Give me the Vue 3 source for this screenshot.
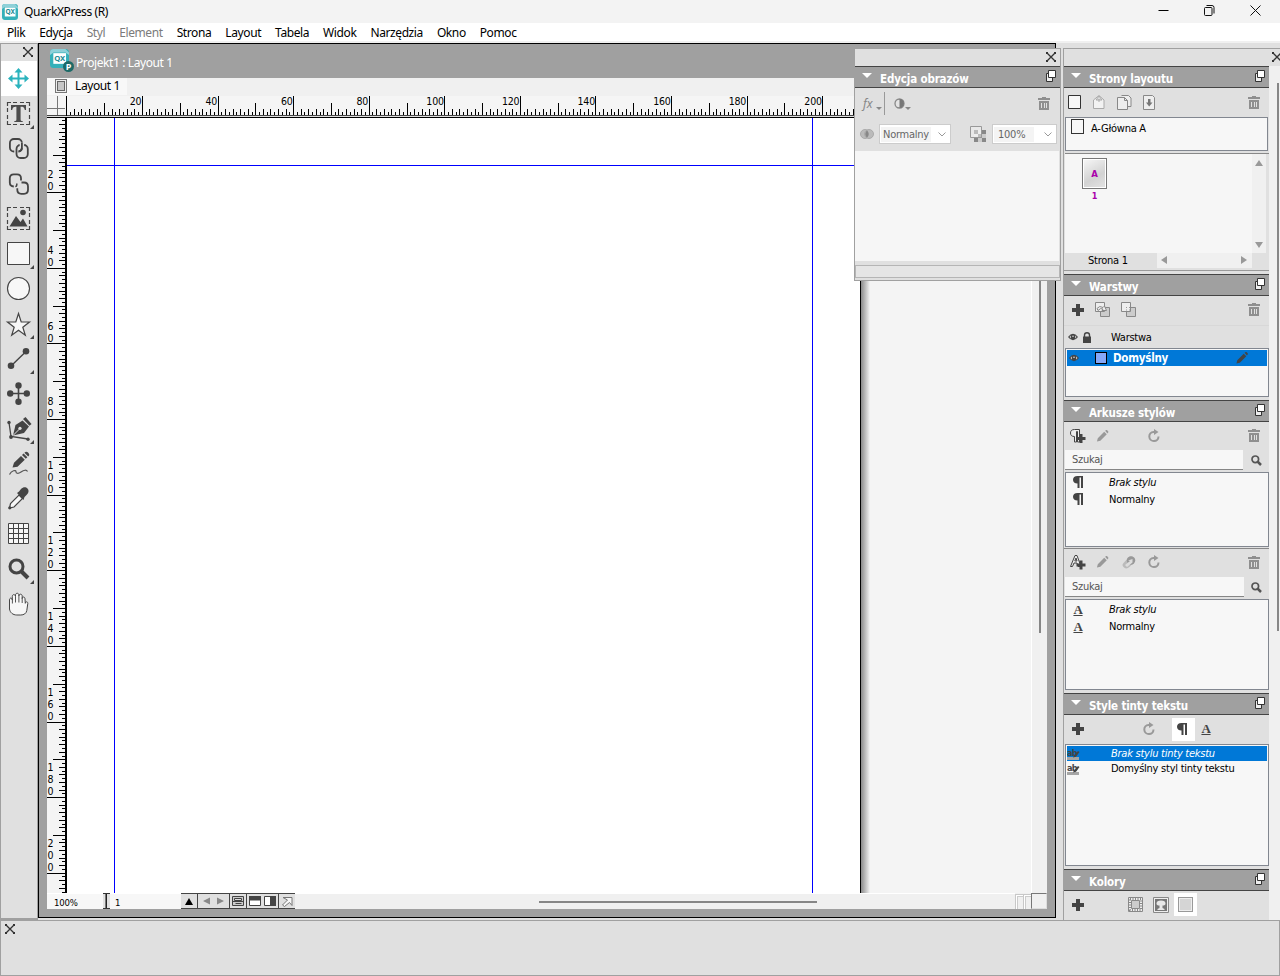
<template>
    <div class="app">
        <svg class="defs" width="0" height="0">
            <symbol id="logo" viewBox="0 0 16 16">
                <rect x="0" y="0" width="16" height="16" rx="3" fill="#35b0b9" />
                <path d="M0 5V3a3 3 0 0 1 3-3h10l3 3v2l-3-2H3z" fill="#8fd0d8" />
                <rect x="2.800" y="3.500" width="10.700" height="9" fill="#fff" />
            </symbol>
            <symbol id="cross" viewBox="0 0 10 10">
                <path d="M1 1l8 8M9 1L1 9" stroke="#333" stroke-width="1.300" />
                <path d="M0 0h2v2H0zM8 0h2v2H8zM0 8h2v2H0zM8 8h2v2H8z" fill="#333" />
            </symbol>
            <symbol id="restore" viewBox="0 0 10 12">
                <path d="M.500 3.500h6v8h-6z" fill="#eee" stroke="#333" />
                <path d="M2.500.500h7v7h-7z" fill="#fff" stroke="#333" />
            </symbol>
            <symbol id="trash" viewBox="0 0 12 13">
                <path d="M0 1h12v2H0zM4 0h4v2H4zM1 4h10v9H1z" fill="#8f8f8f" />
                <path d="M3.500 6v5M6.500 6v5M8.500 6v5" stroke="#e0e0e0" />
            </symbol>
            <symbol id="plus" viewBox="0 0 12 12"><path d="M4 0h4v4h4v4H8v4H4V8H0V4h4z" fill="#444" /></symbol>
            <symbol id="pencil" viewBox="0 0 14 14">
                <path d="M0.500 13.500l1-4L9 2l3 3-7.500 7.500zM10 1l1-.7c.6-.4 1.200-.2 1.700.3l.7.7c.5.500.6 1 .2 1.600L12.800 4z" fill="currentColor" />
            </symbol>
            <symbol id="redo" viewBox="0 0 12 14">
                <path d="M10.500 7.500a4.600 4.600 0 1 1-5-4.600h1.500" fill="none" stroke="#999" stroke-width="2" />
                <path d="M6 0v6L10.500 3z" fill="#999" />
            </symbol>
            <symbol id="pilcrow" viewBox="0 0 10 12">
                <path d="M10 0v12H8V1.500H6.500V12h-2V7.500C1.500 7.500 0 6 0 3.700S1.500 0 4.500 0z" fill="#444" />
            </symbol>
            <symbol id="lens" viewBox="0 0 11 11">
                <circle cx="4.300" cy="4.300" r="3.300" fill="none" stroke="#555" stroke-width="1.700" />
                <path d="M6.500 6.500L10 10" stroke="#555" stroke-width="2.500" />
            </symbol>
            <symbol id="eye" viewBox="0 0 10 8">
                <path d="M0 4q5-6.500 10 0q-5 6.500-10 0" fill="#444" />
                <path d="M1.500 4q.7-1.200 1.500-1.500v3q-.8-.3-1.500-1.500M8.500 4q-.7-1.200-1.500-1.500v3q.8-.3 1.500-1.500" fill="#bbb" />
                <circle cx="5" cy="3.300" r=".8" fill="#ddd" />
            </symbol>

            <!-- toolbox -->
            <symbol id="t-move" viewBox="0 0 36 35">
                <path d="M17.500 9v17M9 17.500h17" stroke="#2bb3bd" stroke-width="2" />
                <path d="M17.500 7l4 4.500h-8zM17.500 28l4-4.500h-8zM7 17.500l4.500-4v8zM28 17.500l-4.500-4v8z" fill="#2bb3bd" />
            </symbol>
            <symbol id="t-text" viewBox="0 0 36 35">
                <path d="M6.500 10V6.500H10M12 6.500h4M19 6.500h4M25 6.500h3.500V10M28.500 12v4M28.500 19v4M28.500 25v3.500H25M23 28.500h-4M16 28.500h-4M10 28.500H6.500V25M6.500 23v-4M6.500 16v-4" fill="none" stroke="#444" stroke-width="1.200" />
                <path d="M10 9h15v5h-1.200c-.6-2.500-1.200-3.200-4.200-3.200v12.500c0 1.500.5 1.700 2.200 1.900v.8h-8.600v-.8c1.700-.2 2.200-.4 2.200-1.900V10.800c-3 0-3.600.7-4.200 3.200H10z" fill="#4c4c4c" />
            </symbol>
            <symbol id="t-link" viewBox="0 0 36 35">
                <rect x="8.900" y="8" width="12" height="12.500" rx="4" fill="none" stroke="#444" stroke-width="1.800" />
                <rect x="15.500" y="14" width="11.300" height="13" rx="4" fill="none" stroke="#e0e0e0" stroke-width="4.500" />
                <rect x="15.500" y="14" width="11.300" height="13" rx="4" fill="none" stroke="#444" stroke-width="1.800" />
                <path d="M20.900 11.500v5.500" stroke="#e0e0e0" stroke-width="4.500" />
                <path d="M20.900 11.500v5q0 3.800-3.500 4" fill="none" stroke="#444" stroke-width="1.800" />
            </symbol>
            <symbol id="t-unlink" viewBox="0 0 36 35">
                <path d="M20 14.500v-2.200q0-4-4-4h-3.200q-4 0-4 4v4.200q0 3.700 4 4" fill="none" stroke="#444" stroke-width="1.800" />
                <path d="M20.500 16.500h2.500q4 0 4 4v3.300q0 4-4 4h-2.700q-4 0-4-4v-1.500" fill="none" stroke="#444" stroke-width="1.800" />
                <path d="M15.800 17.500v1.500q0 1.500-1.500 1.500" fill="none" stroke="#444" stroke-width="1.500" />
            </symbol>
            <symbol id="t-image" viewBox="0 0 36 35">
                <path d="M6.500 10V6.500H10M12 6.500h4M19 6.500h4M25 6.500h3.500V10M28.500 12v4M28.500 19v4M28.500 25v3.500H25M23 28.500h-4M16 28.500h-4M10 28.500H6.500V25M6.500 23v-4M6.500 16v-4" fill="none" stroke="#444" stroke-width="1.200" />
                <circle cx="22" cy="11.500" r="2.800" fill="#444" />
                <path d="M8.500 25.500l6.500-10.500 4.500 6 2.500-3.500 4.500 8z" fill="#444" />
            </symbol>
            <symbol id="t-rect" viewBox="0 0 36 35"><path d="M6.500 6.500h22v22h-22z" fill="#f7f7f7" stroke="#444" /></symbol>
            <symbol id="t-oval" viewBox="0 0 36 35"><circle cx="17.500" cy="17.500" r="11" fill="#f7f7f7" stroke="#444" stroke-width="1.100" /></symbol>
            <symbol id="t-star" viewBox="0 0 36 35">
                <path d="M17.500 7.500l2.700 8.500h8.300l-6.700 5.200 2.500 8-6.800-5-6.800 5 2.500-8-6.700-5.200h8.300z" fill="#f7f7f7" stroke="#444" stroke-width="1.200" />
            </symbol>
            <symbol id="t-line" viewBox="0 0 36 35">
                <path d="M10 25l15-14.500" stroke="#444" stroke-width="1.400" />
                <circle cx="10" cy="24.800" r="3.300" fill="#444" /><circle cx="25" cy="10.300" r="3.300" fill="#444" />
            </symbol>
            <symbol id="t-compose" viewBox="0 0 36 35">
                <path d="M17.500 9v17M9 17.500h17" stroke="#444" stroke-width="1.600" />
                <circle cx="17.500" cy="9.500" r="3.200" fill="#444" /><circle cx="17.500" cy="25.800" r="3.200" fill="#444" />
                <circle cx="9.200" cy="17.500" r="3.200" fill="#444" /><circle cx="25.800" cy="17.500" r="3.200" fill="#444" />
            </symbol>
            <symbol id="t-pen" viewBox="0 0 36 35">
                <path d="M8 11.500l2 14 17 2.500" fill="none" stroke="#444" stroke-width="1.300" />
                <circle cx="8" cy="11.500" r="1.700" fill="#444" /><circle cx="10" cy="26" r="1.900" fill="#444" /><circle cx="27" cy="28.300" r="1.700" fill="#444" />
                <path d="M12 24.500l2.500-10.500 7-4.500 6.500 6-5 6.500z" fill="#444" />
                <path d="M22 8l2.500-2 6 7-2 1.800z" fill="#444" />
                <path d="M12.500 24l6-6" stroke="#e0e0e0" /><circle cx="19" cy="17.300" r="1.600" fill="#e0e0e0" />
            </symbol>
            <symbol id="t-pencil" viewBox="0 0 36 35">
                <path d="M11.500 21.500l1.500-4.700 7-6.800 3.800 3.700-7.300 7zM21 9l1.600-1.600 3.800 3.800-1.600 1.600zM23.400 6.700l1-.8q1.400-.6 2.900.8t.8 2.900l-.9 1z" fill="#444" />
                <path d="M8.500 28.500c2-4 6.500-5 6.500-2.800 0 1.800 2 2.300 5 .3s5.500-2.500 6.500-.500" fill="none" stroke="#555" stroke-width="1.200" />
            </symbol>
            <symbol id="t-dropper" viewBox="0 0 36 35">
                <path d="M8.500 27l1-4.500 8.500-8.500 3.500 3.500-8.500 8.500z" fill="#f7f7f7" stroke="#444" stroke-width="1.200" />
                <circle cx="8.800" cy="26.800" r="1.600" fill="#444" />
                <path d="M16 12l2-1.500 2-2.500c2.500-2.500 5-2 6.500-.500s1.500 4-.500 6L23.500 16l-1 3z" fill="#444" />
            </symbol>
            <symbol id="t-grid" viewBox="0 0 36 35">
                <path d="M7.500 7.500h20v20h-20z" fill="#f7f7f7" />
                <path d="M7.500 7.500h20v20h-20zM12.500 7.500v20M17.500 7.500v20M22.500 7.500v20M7.500 12.500h20M7.500 17.500h20M7.500 22.500h20" fill="none" stroke="#444" />
            </symbol>
            <symbol id="t-zoom" viewBox="0 0 36 35">
                <circle cx="15.500" cy="15.500" r="6.500" fill="none" stroke="#444" stroke-width="3" />
                <path d="M20.500 20.500l6.500 6.500" stroke="#444" stroke-width="4" />
            </symbol>
            <symbol id="t-hand" viewBox="0 0 36 35">
                <path d="M8.500 14c0-2.500 2.500-2.500 2.800 0V10.500c0-2.500 3-2.500 3.200 0V9c.2-2.300 3.200-2.300 3.400 0v1c.2-2.500 3.200-2.300 3.300 0v2.500c.3-2 2.600-2 2.800.3l.3 4.500c.4-2 2.500-2 2.500.2l-1 7c-.5 3-3 4.500-6 4.500h-4c-4 0-6.800-2.500-7.300-6z" fill="#f7f7f7" stroke="#444" />
                <path d="M11.400 13.500v4M14.500 10.500v6M17.900 10v6.500M21.200 11.500v5.500" stroke="#555" fill="none" />
            </symbol>
        </svg>

        <header class="titlebar">
            <svg class="app-logo" viewBox="0 0 16 16">
                <use href="#logo" width="16" height="16" />
                <text x="8.200" y="10.200" text-anchor="middle">QX</text>
            </svg>
            <span class="app-name">QuarkXPress (R)</span>
            <div class="window-buttons">
                <svg viewBox="0 0 11 11"><path d="M.500 5.500h10" stroke="#000" /></svg>
                <svg viewBox="0 0 11 11"><path d="M2 2.500h5q1 0 1 1v6q0 1-1 1H1.500q-1 0-1-1v-6q0-1 1-1zM2.500.500H8q2 0 2 2V8.500" fill="none" stroke="#111" /></svg>
                <svg viewBox="0 0 11 11"><path d="M.500.500l10 10M10.500.500l-10 10" stroke="#111" /></svg>
            </div>
        </header>
        <nav class="menubar">
            <span v-for="item in menu" :key="item" :class="{ disabled: item === 'Styl' || item === 'Element' }">{{ item }}</span>
        </nav>

        <main class="workspace">
            <aside class="toolbox">
                <div class="toolbox-close"><svg class="x"><use href="#cross" /></svg></div>
                <div v-for="(tool, i) in tools" :key="tool.id" class="tool" :class="{ active: i === 0 }">
                    <svg width="36" height="35"><use :href="'#t-' + tool.id" /></svg>
                    <i v-if="tool.more" class="more"></i>
                </div>
            </aside>

            <section class="document">
                <div class="doc-title">
                    <span class="doc-logo">
                        <svg class="doc-qx" viewBox="0 0 16 16">
                            <use href="#logo" width="16" height="16" />
                            <text x="8.200" y="10.200" text-anchor="middle">QX</text>
                        </svg>
                        <b>P</b>
                    </span>
                    <span>Projekt1 : Layout 1</span>
                </div>
                <div class="doc-tabs">
                    <div class="doc-tab"><i></i>Layout 1</div>
                </div>
                <div class="doc-view">
                    <svg width="1000" height="797" shape-rendering="crispEdges">
                        <rect width="1000" height="20" fill="#f5f5f5" />
                        <rect width="19" height="797" fill="#f4f4f4" />
                        <path d="M0 12.500h18M10.500 0v19" stroke="#777" />
                        <path d="M0 19.500h1000" stroke="#444" />
                        <path d="M0 20.500h1000" stroke="#ddd" />
                        <path d="M0 21.500h1000M19.500 0v20" stroke="#000" />
                        <rect x="20" y="22" width="793" height="775" fill="#fff" />
                        <rect x="814" y="22" width="171" height="775" fill="#f4f4f4" />
                        <linearGradient id="edge"><stop offset="0" stop-color="#8a8a8a" /><stop offset="1" stop-color="#f4f4f4" /></linearGradient>
                        <rect x="814" y="22" width="9" height="775" fill="url(#edge)" />
                        <path d="M813.500 22v775" stroke="#000" />
                        <rect x="18" y="21" width="2" height="776" fill="#000" />
                        <path d="M67.500 22v775M765.500 22v775" stroke="#00f" />
                        <path d="M20 69.500h793" stroke="#00f" />
                        <path :d="topTicks" stroke="#000" />
                        <path :d="sideTicks" stroke="#000" />
                        <g class="ruler-text">
                            <text v-for="n in 10" :key="n" :x="18.8 + n * 75.6" y="9" text-anchor="end">{{ n * 20 }}</text>
                        </g>
                        <g v-for="n in 10" :key="'s' + n" class="ruler-text">
                            <text v-for="(d, k) in digits(n)" :key="k" x="0.500" :y="sideY(n, k)">{{ d }}</text>
                        </g>
                    </svg>
                    <div class="doc-vscroll"><i></i></div>
                </div>
                <div class="doc-status">
                    <span class="zoom-field">100%</span>
                    <i class="splitter"></i>
                    <span class="page-field">1</span>
                    <svg class="status-icons" width="114" height="16" viewBox="0 0 114 16">
                        <path d="M0 0h114v16H0z" fill="#e0e0e0" />
                        <path d="M0 .500h114M16.500 0v16M48.500 0v16M65.500 0v16M97.500 0v16M0 15.500h114" stroke="#444" />
                        <path d="M4 12l4-7 4 7z" fill="#000" />
                        <path d="M29 4.500v7l-7-3.500zM36 4.500v7l7-3.500z" fill="#888" />
                        <path d="M51.500 3.500h11v9h-11z" fill="#ccc" stroke="#444" /><path d="M53.500 5.500h7v2h-7zM52 8.500h11M54.500 10.500h6" fill="#ddd" stroke="#444" />
                        <path d="M68.500 3.500h11v9h-11z" fill="#fff" stroke="#444" /><path d="M68 3h12v4.500H68z" fill="#444" />
                        <path d="M83.500 3.500h11v9h-11z" fill="#fff" stroke="#444" /><path d="M89 3h6v10h-6z" fill="#444" />
                        <path d="M102 4.500h9v8l-2.500-3-5 4-2-1.500 5-5z" fill="#f7f7f7" stroke="#777" />
                    </svg>
                    <div class="doc-hscroll"><i></i></div>
                    <b class="pane-grip"></b><b class="pane-grip"></b>
                    <b class="size-grip"></b>
                </div>

                <!-- floating palette over the page -->
                <div class="floating">
                    <div class="close-strip"><svg class="x"><use href="#cross" /></svg></div>
                    <div class="panel-title"><i></i><span>Edycja obrazów</span><svg><use href="#restore" /></svg></div>
                    <div class="fx-row">
                        <em>fx</em><i class="drop"></i><i class="bar"></i>
                        <svg width="11" height="11" viewBox="0 0 11 11"><circle cx="5.500" cy="5.500" r="4.500" fill="#e4e4e4" stroke="#888" stroke-width="1.300" /><path d="M5.500 1a4.500 4.500 0 0 1 0 9z" fill="#777" /></svg>
                        <i class="drop"></i>
                        <svg class="trash" width="12" height="13"><use href="#trash" /></svg>
                    </div>
                    <div class="blend-row">
                        <svg width="14" height="10" viewBox="0 0 14 10"><circle cx="5" cy="5" r="4.500" fill="#bbb" stroke="#aaa" /><circle cx="9" cy="5" r="4.500" fill="#bbb" stroke="#aaa" /><path d="M7 1.200q3.500 3.800 0 7.600q-3.500-3.800 0-7.600" fill="#888" /></svg>
                        <div class="select mode"><span>Normalny</span><svg width="8" height="5" viewBox="0 0 8 5"><path d="M.500.500l3.500 3.500L7.500.500" fill="none" stroke="#999" /></svg></div>
                        <svg class="opacity-icon" width="16" height="16" viewBox="0 0 16 16">
                            <path d="M4 4h12v12H4z" fill="#eee" /><path d="M12 4h4v4h-4zM4 12h4v4H4zM12 12h4v4h-4zM8 8h4v4H8z" fill="#888" /><path d="M12 8h4v4h-4zM8 12h4v4H8z" fill="#ccc" />
                            <path d="M.500.500h11v11h-11z" fill="#eee" fill-opacity=".6" stroke="#999" /><path d="M4 4h4v4H4zM8 8h3v3H8z" fill="#bbb" />
                        </svg>
                        <div class="select amount"><span>100%</span><svg width="8" height="5" viewBox="0 0 8 5"><path d="M.500.500l3.500 3.500L7.500.500" fill="none" stroke="#999" /></svg></div>
                    </div>
                    <div class="floating-list"></div>
                    <div class="floating-foot"></div>
                </div>
            </section>

            <aside class="dock">
                <div class="close-strip dock-close"><svg class="x"><use href="#cross" /></svg></div>
                <div class="dock-body">
                    <div class="panels">
                        <div class="panel-title"><i></i><span>Strony layoutu</span><svg><use href="#restore" /></svg></div>
                        <div class="icon-row pages-tools">
                            <svg width="87" height="15" viewBox="0 0 87 15">
                                <path d="M.500.500h12v13H.500z" fill="#f7f7f7" stroke="#333" />
                                <path d="M25.500 13.500v-8.500l5.500-4.500 5 4.500v8.500z" fill="#f2f2f2" stroke="#aaa" /><path d="M28 5l3-4 3 4zM31 4v3" fill="#ddd" stroke="#aaa" />
                                <path d="M53.500.500h7l2.500 2.500v8.500H60" fill="#eee" stroke="#888" /><path d="M49.500 2.500h7l3 3v9h-10zM56.500 2.500v3h3" fill="#eee" stroke="#888" />
                                <path d="M75.500.500h9l2 2v12h-11z" fill="#eee" stroke="#888" /><path d="M80 4h2.500v3.500h2l-3.300 4-3.200-4h2z" fill="#777" />
                            </svg>
                            <svg class="trash" width="12" height="13"><use href="#trash" /></svg>
                        </div>
                        <div class="box masters"><i></i>A-Główna A</div>
                        <div class="pages">
                            <div class="pages-area"><div class="page-thumb">A</div><b>1</b></div>
                            <div class="pages-scroll"><i class="up"></i><i class="down"></i></div>
                        </div>
                        <div class="pages-foot"><span>Strona 1</span><div><i class="left"></i><i class="right"></i></div></div>

                        <div class="panel-title"><i></i><span>Warstwy</span><svg><use href="#restore" /></svg></div>
                        <div class="icon-row layers-tools">
                            <svg width="12" height="12"><use href="#plus" /></svg>
                            <svg class="merge" width="41" height="15" viewBox="0 0 41 15">
                                <path d="M5.500 5.500h9v9h-9z" fill="#ccc" stroke="#888" /><path d="M.500.500h9v9h-9z" fill="#eee" stroke="#888" /><path d="M2 6.500q2.500-3.500 6-1L9.500 4l2 4.500H7l1-1.500Q5.500 5.500 3 8.500z" fill="#eee" stroke="#888" />
                                <path d="M31.500 5.500h9v9h-9z" fill="#ccc" stroke="#888" /><path d="M26.500.500h9v9h-9z" fill="#eee" stroke="#888" /><path d="M31 5.500h1M34 5.500h1M31 8h1M34 8h1" stroke="#999" />
                            </svg>
                            <svg class="trash" width="12" height="13"><use href="#trash" /></svg>
                        </div>
                        <div class="layers-head">
                            <svg width="10" height="8"><use href="#eye" /></svg>
                            <svg width="8" height="11" viewBox="0 0 8 11"><path d="M0 4.500h8V11H0z" fill="#444" /><path d="M1.500 5V3q0-2.300 2.500-2.300T6.500 3v2" fill="none" stroke="#444" stroke-width="1.400" /></svg>
                            <span>Warstwa</span>
                        </div>
                        <div class="box layers">
                            <div class="layer">
                                <svg width="10" height="8"><use href="#eye" /></svg>
                                <i></i>
                                <b>Domyślny</b>
                                <svg class="pencil dark" width="12" height="12"><use href="#pencil" /></svg>
                            </div>
                        </div>

                        <div class="panel-title"><i></i><span>Arkusze stylów</span><svg><use href="#restore" /></svg></div>
                        <template v-for="kind in ['paragraph', 'character']" :key="kind">
                            <div class="icon-row styles-tools" :class="kind">
                                <svg v-if="kind === 'paragraph'" width="16" height="14" viewBox="0 0 16 14">
                                    <path d="M9.500.500v12.500h-2V2.500h-1V13h-2V7.500C1.500 7.500.500 6 .500 4S1.500.500 4.500.500z" fill="#eee" stroke="#444" />
                                    <path d="M9.500 5h3v3h3v3h-3v3h-3v-3h-2V8h2z" fill="#444" />
                                </svg>
                                <svg v-else width="16" height="15" viewBox="0 0 16 15">
                                    <path d="M.500 11.500l4.500-11h2l4 11H8L7 8H4l-1.500 3.500zM4.800 6l1.200-3 1 3z" fill="#eee" stroke="#444" />
                                    <path d="M9.500 5.500h3v3h3v3h-3v3h-3v-3h-3v-3h3z" fill="#444" />
                                </svg>
                                <svg class="pencil" width="13" height="12"><use href="#pencil" /></svg>
                                <svg class="paint" width="14" height="13" viewBox="0 0 14 13">
                                    <g v-if="kind === 'character'"><path d="M1.500 11q-2-2 0-4l5-5.500q2-1.500 4.500-.5 3 1.500 2 4L8 10.500q-4 3.500-6.500.5" fill="#bbb" /><circle cx="9" cy="4.500" r="4.200" fill="#999" /><path d="M6 4.500l4.500-1.500v3.500l-5.500 4.500-2-2 5-4z" fill="#ddd" /></g>
                                </svg>
                                <svg width="12" height="14"><use href="#redo" /></svg>
                                <svg class="trash" width="12" height="13"><use href="#trash" /></svg>
                            </div>
                            <div class="search" :class="kind"><span>Szukaj</span><svg width="11" height="11"><use href="#lens" /></svg></div>
                            <div class="box style-list" :class="kind">
                                <div v-for="name in ['Brak stylu', 'Normalny']" :key="name" class="style-row">
                                    <svg v-if="kind === 'paragraph'" width="10" height="12"><use href="#pilcrow" /></svg>
                                    <u v-else>A</u>
                                    <span :class="{ none: name !== 'Normalny' }">{{ name }}</span>
                                </div>
                            </div>
                        </template>

                        <div class="panel-title"><i></i><span>Style tinty tekstu</span><svg><use href="#restore" /></svg></div>
                        <div class="icon-row tint-tools">
                            <svg width="12" height="12"><use href="#plus" /></svg>
                            <svg class="tint-redo" width="12" height="14"><use href="#redo" /></svg>
                            <div class="pressed"><svg width="10" height="12"><use href="#pilcrow" /></svg></div>
                            <u>A</u>
                        </div>
                        <div class="box tint-list">
                            <div v-for="(name, i) in tints" :key="name" class="tint-row" :class="{ selected: i === 0 }">
                                <svg width="13" height="12" viewBox="0 0 13 12">
                                    <path d="M0 9h12v3H0z" fill="#a5a5a5" />
                                    <text x="0" y="8">ab</text>
                                    <path d="M6 9.500l1-2 4-4.500 1.500 1-3.500 4.700z" fill="#444" />
                                </svg>
                                <span :class="{ none: i === 0 }">{{ name }}</span>
                            </div>
                        </div>

                        <div class="panel-title"><i></i><span>Kolory</span><svg><use href="#restore" /></svg></div>
                        <div class="icon-row colors-tools">
                            <svg width="12" height="12"><use href="#plus" /></svg>
                            <svg class="frames" width="41" height="16" viewBox="0 0 41 16">
                                <path d="M.500.500h14v14H.500z" fill="#eee" stroke="#888" /><path d="M2 2h11v11H2z" fill="none" stroke="#888" stroke-width="2" stroke-dasharray="1 1.500" /><path d="M3.500 3.500h8v8h-8z" fill="#ccc" stroke="#888" />
                                <path d="M25.500.500h15v15h-15z" fill="#eee" stroke="#888" /><path d="M27 2h12v12H27z" fill="#777" /><path d="M33 3.500q4.500 0 4.500 3 0 2-3 2V11l2 1v1h-7v-1l2-1V8.500q-3 0-3-2 0-3 4.500-3" fill="#e8e8e8" />
                            </svg>
                            <div class="pressed"><i></i></div>
                        </div>
                    </div>
                    <div class="dock-scroll"><i></i></div>
                </div>
            </aside>
        </main>
        <footer class="measurements"><svg class="x"><use href="#cross" /></svg></footer>
    </div>
</template>

<script setup>
const menu = ['Plik', 'Edycja', 'Styl', 'Element', 'Strona', 'Layout', 'Tabela', 'Widok', 'Narzędzia', 'Okno', 'Pomoc'];
const tints = ['Brak stylu tinty tekstu', 'Domyślny styl tinty tekstu'];

const tools = [
    { id: 'move' },
    { id: 'text', more: true },
    { id: 'link' },
    { id: 'unlink' },
    { id: 'image' },
    { id: 'rect', more: true },
    { id: 'oval' },
    { id: 'star', more: true },
    { id: 'line', more: true },
    { id: 'compose' },
    { id: 'pen', more: true },
    { id: 'pencil' },
    { id: 'dropper' },
    { id: 'grid' },
    { id: 'zoom', more: true },
    { id: 'hand' },
];

// one tick per millimetre
const MM = 3.78;

function tickSize(n) {
    if (n % 20 === 0) return 19;
    if (n % 10 === 0) return 12;
    return n % 2 === 0 ? 6 : 3;
}

let topTicks = '';
let sideTicks = '';
for (let n = 1; n <= 250; n++) {
    const x = Math.floor(19.8 + n * MM) + 0.5;
    topTicks += `M${x} 19v-${tickSize(n)}`;
    if (n <= 205) {
        const y = Math.floor(21.2 + n * MM) + 0.5;
        sideTicks += `M18 ${y}h-${tickSize(n)}`;
    }
}

const digits = (n) => String(n * 20).split('');
const sideY = (n, k) => Math.round(20.3 + n * 75.6 - 12 * (digits(n).length - 1 - k) - 1.5);
</script>

<style>
body {
    margin: 0;
    overflow: hidden;
}
</style>

<style scoped>
.app {
    width: 1280px;
    height: 976px;
    display: flex;
    flex-direction: column;
    background: #e0e0e0;
    font-family: "DejaVu Sans Condensed", "DejaVu Sans", sans-serif;
    font-size: 11px;
    letter-spacing: -0.25px;
    color: #000;
    overflow: hidden;
}

.app * {
    box-sizing: border-box;
}

svg {
    display: block;
    flex: none;
}

.defs {
    position: absolute;
}

.x {
    width: 10px;
    height: 10px;
}

.titlebar {
    height: 23px;
    flex: none;
    display: flex;
    align-items: center;
    background: #f3f3f3;
    padding-left: 2px;
    font: 12px "Noto Sans", sans-serif;
    letter-spacing: -0.4px;
}

.app-logo {
    width: 16px;
    height: 16px;
    margin-right: 6px;
}

.app-logo text,
.doc-qx text {
    font: bold 6.5px "Noto Sans", sans-serif;
    letter-spacing: 0;
    fill: #238a94;
}

.window-buttons {
    margin-left: auto;
    display: flex;
    gap: 35px;
    padding-right: 19px;
    margin-top: -2px;
}

.window-buttons svg {
    width: 11px;
    height: 11px;
}

.menubar {
    height: 20px;
    flex: none;
    display: flex;
    gap: 14px;
    padding-left: 7px;
    background: #fff;
    border-bottom: 2px solid #f0f0f0;
    font: 12px/20px "Noto Sans", sans-serif;
    letter-spacing: -0.4px;
}

.menubar .disabled {
    color: #7b7b7b;
}

.workspace {
    height: 877px;
    flex: none;
    display: flex;
}

.toolbox {
    width: 38px;
    height: 877px;
    border: 1px solid #a0a0a0;
    border-bottom-width: 2px;
}

.toolbox-close {
    height: 17px;
    display: flex;
    justify-content: flex-end;
    padding: 3px 4px 0 0;
}

.tool {
    position: relative;
    height: 35px;
}

.tool.active {
    background: #fff;
}

.more {
    position: absolute;
    right: 3px;
    bottom: 2px;
    border-left: 4px solid transparent;
    border-bottom: 4px solid #444;
}

.document {
    position: relative;
    width: 1018px;
    height: 875px;
    display: flex;
    flex-direction: column;
    background: #a0a0a0;
    border: 1px solid #000;
    padding: 0 8px;
}

.doc-title {
    height: 34px;
    flex: none;
    display: flex;
    align-items: flex-end;
    padding: 0 0 6px 3px;
    color: #fff;
    font: 12px/18px "Noto Sans", sans-serif;
    letter-spacing: -0.4px;
}

.doc-logo {
    position: relative;
    width: 26px;
    height: 22px;
}

.doc-qx {
    width: 19px;
    height: 19px;
    margin-top: -1px;
}

.doc-logo b {
    position: absolute;
    left: 13px;
    top: 11px;
    width: 11px;
    height: 11px;
    border-radius: 50%;
    background: #1d6a68;
    font: bold 9px/11px "Noto Sans", sans-serif;
    letter-spacing: 0;
    text-align: center;
}

.doc-tabs {
    height: 18px;
    flex: none;
    background: #f0f0f0;
}

.doc-tab {
    width: 80px;
    height: 17px;
    display: flex;
    align-items: center;
    gap: 8px;
    padding: 0 0 1px 8px;
    background: #f8f8f8;
    font: 12px/16px "Noto Sans", sans-serif;
    letter-spacing: -0.4px;
}

.doc-tab i {
    width: 12px;
    height: 14px;
    border: 1px solid #777;
    background: #c6c6c6;
    box-shadow: inset 0 0 0 1px #eee, inset 0 0 0 2px #666;
}

.doc-view {
    position: relative;
    height: 797px;
    flex: none;
    overflow: hidden;
}

.ruler-text {
    font: 10.5px "DejaVu Sans Condensed", sans-serif;
    letter-spacing: -0.2px;
}

.doc-vscroll {
    position: absolute;
    top: 0;
    right: 0;
    width: 16px;
    height: 797px;
    background: #f0f0f0;
    border-left: 1px solid #fff;
}

.doc-vscroll i {
    display: block;
    width: 2px;
    height: 537px;
    margin-left: 7px;
    background: #868686;
}

.doc-status {
    height: 16px;
    flex: none;
    display: flex;
    background: #f0f0f0;
}

.zoom-field,
.page-field {
    width: 56px;
    padding-left: 7px;
    background: #f7f7f7;
    border-top: 1px solid #fff;
    font-size: 9.5px;
    line-height: 18px;
    letter-spacing: -0.15px;
}

.splitter {
    width: 7px;
    border: 1px solid #333;
    border-width: 1px 0;
    background: linear-gradient(90deg, #e0e0e0 2px, #777 2px, #777 3px, #222 3px, #222 4px, #e0e0e0 4px);
}

.page-field {
    width: 71px;
    padding-left: 5px;
}

.doc-hscroll {
    flex: 1;
    border-top: 1px solid #fff;
    padding: 7px 0 0 244px;
}

.doc-hscroll i {
    display: block;
    width: 278px;
    height: 2px;
    background: #868686;
}

.pane-grip {
    width: 8px;
    margin-top: 1px;
    border: 1px solid #c8c8c8;
    border-width: 1px 0 0 1px;
    box-shadow: inset 1px 1px 0 #fff, inset 2px 2px 0 #ccc;
}

.size-grip {
    width: 16px;
    border: 1px solid #777;
    border-right-color: #ddd;
    border-bottom-color: #ddd;
}

.floating {
    position: absolute;
    left: 815px;
    top: 4px;
    width: 207px;
    height: 233px;
    background: #e0e0e0;
    border: 1px solid #a0a0a0;
}

.close-strip {
    height: 17px;
    display: flex;
    justify-content: flex-end;
    padding: 3px 4px 0 0;
}

.panel-title {
    height: 22px;
    display: flex;
    flex: none;
    padding: 0 8px 0 8px;
    background: #a0a0a0;
    border: 1px solid #444;
    border-width: 1px 0;
    color: #fff;
    font-weight: bold;
    font-size: 11.5px;
    line-height: 24px;
    letter-spacing: -0.15px;
}

.panel-title i {
    height: 0;
    border: 5px solid transparent;
    border-top: 5px solid #fff;
    border-bottom: 0;
    margin: 6px 8px 0 -1px;
}

.panel-title svg {
    width: 10px;
    height: 12px;
    margin: 3px -4px 0 auto;
}

.fx-row {
    height: 33px;
    display: flex;
    align-items: center;
    padding: 0 10px 2px 8px;
}

.fx-row em {
    width: 13px;
    font-family: "Noto Sans", sans-serif;
    font-size: 12px;
    letter-spacing: 0;
    color: #888;
}

.drop {
    border: 3px solid transparent;
    border-top: 3px solid #888;
    border-bottom: 0;
    margin: 9px 0 0 0;
}

.bar {
    width: 1px;
    height: 23px;
    background: #999;
    margin: 0 9px 0 2px;
}

.trash {
    margin-left: auto;
}

.blend-row {
    height: 30px;
    display: flex;
    align-items: center;
    padding: 0 3px 4px 5px;
}

.select {
    height: 20px;
    display: flex;
    align-items: center;
    justify-content: space-between;
    padding: 0 4px 0 1px;
    background: #fff;
    border: 1px solid #ccc;
    color: #666;
}

.select span {
    padding: 1px 2px;
    background: #f4f4f4;
}

.mode {
    width: 72px;
    margin-left: 5px;
}

.opacity-icon {
    margin: 0 6px 0 19px;
}

.amount {
    width: 65px;
}

.amount span {
    padding-left: 4px;
    padding-right: 9px;
}

.floating-list {
    height: 110px;
    background: #f6f6f6;
    border-right: 1px solid #e0e0e0;
}

.floating-foot {
    height: 13px;
    margin: 4px 0 0;
    background: #e5e5e5;
    border: 1px solid #b5b5b5;
}

.dock {
    width: 217px;
    margin: 5px 0 0 7px;
    border: 1px solid #a0a0a0;
    border-width: 1px 0 0 1px;
    overflow: hidden;
}

.dock-close {
    padding-right: 0;
}

.dock-close .x {
    margin-right: -2px;
}

.dock-body {
    display: flex;
}

.panels {
    width: 205px;
}

.dock-scroll {
    width: 11px;
    height: 854px;
    background: #f0f0f0;
    padding: 17px 0 0 8px;
}

.dock-scroll i {
    display: block;
    width: 2px;
    height: 548px;
    background: #868686;
}

.icon-row {
    display: flex;
    align-items: center;
    padding: 0 9px 0 8px;
}

.box {
    background: #f7f7f7;
    border: 1px solid #828790;
    margin-left: 1px;
}

.pages-tools {
    height: 29px;
    padding-left: 4px;
}

.masters {
    height: 34px;
    width: 203px;
    display: flex;
    gap: 7px;
    padding: 1px 0 0 5px;
    line-height: 19px;
}

.masters i {
    width: 13px;
    height: 15px;
    border: 1px solid #333;
}

.pages {
    height: 100px;
    display: flex;
    margin-top: 2px;
    margin-left: 1px;
    border-top: 1px solid #888;
}

.pages-area {
    width: 187px;
    background: #f6f6f6;
    padding: 4px 0 0 17px;
    color: #a0a;
    font-size: 9px;
}

.page-thumb {
    width: 25px;
    height: 31px;
    border: 1px solid #777;
    background: linear-gradient(150deg, #f8f8f8, #d2d2d2 60%, #e4e4e4);
    box-shadow: inset 0 0 0 1px #fff;
    font-size: 9.5px;
    font-weight: bold;
    line-height: 29px;
    text-align: center;
}

.pages-area b {
    display: block;
    width: 25px;
    text-align: center;
    line-height: 14px;
}

.pages-scroll {
    width: 14px;
    display: flex;
    flex-direction: column;
    align-items: center;
    justify-content: space-between;
    padding: 6px 0 5px;
    background: #f0f0f0;
}

.up,
.down {
    border: 4px solid transparent;
    border-bottom: 6px solid #999;
    border-top: 0;
}

.down {
    border-top: 6px solid #999;
    border-bottom: 0;
}

.pages-foot {
    height: 18px;
    display: flex;
    border-bottom: 1px solid #999;
    margin-bottom: 3px;
    line-height: 15px;
}

.pages-foot span {
    width: 93px;
    padding-left: 24px;
}

.pages-foot div {
    width: 95px;
    height: 15px;
    display: flex;
    align-items: center;
    justify-content: space-between;
    padding: 0 5px 2px 4px;
    background: #f0f0f0;
}

.left,
.right {
    border: 4px solid transparent;
    border-right: 6px solid #999;
    border-left: 0;
}

.right {
    border-left: 6px solid #999;
    border-right: 0;
}

.layers-tools {
    height: 29px;
    padding-bottom: 2px;
}

.merge {
    margin-left: 11px;
}

.layers-head {
    height: 23px;
    display: flex;
    align-items: center;
    padding-left: 4px;
    border-top: 1px solid #d8d8d8;
}

.layers-head svg + svg {
    margin-left: 5px;
}

.layers-head span {
    margin-left: 20px;
}

.layers {
    height: 49px;
    padding: 1px;
    margin-bottom: 3px;
}

.layer {
    height: 16px;
    display: flex;
    align-items: center;
    padding: 0 19px 0 2px;
    background: #0078d7;
    color: #fff;
    font-size: 11.5px;
}

.layer i {
    width: 12px;
    height: 12px;
    margin: -1px 6px 0 16px;
    border: 1px solid #000;
    background: #85a8f8;
}

.pencil {
    color: #999;
}

.pencil.dark {
    margin-left: auto;
    color: #444;
}

.styles-tools {
    height: 28px;
    padding: 0 9px 1px 6px;
}

.styles-tools .pencil {
    margin-left: 10px;
}

.paint {
    margin: 0 12px 0 13px;
}

.search {
    height: 22px;
    display: flex;
    align-items: center;
    padding: 0 7px 2px 1px;
}

.search span {
    width: 180px;
    height: 20px;
    padding-left: 7px;
    background: #f7f7f7;
    border-bottom: 1px solid #868686;
    line-height: 20px;
    color: #555;
}

.search svg {
    margin-left: 8px;
}

.search.character svg {
    margin-left: 7px;
}

.style-list {
    height: 75px;
    padding-top: 1px;
}

.style-list.character {
    height: 91px;
    margin-bottom: 3px;
}

.styles-tools.character {
    height: 29px;
    margin-top: 1px;
    border-top: 1px solid #888;
    padding-bottom: 2px;
}

.style-row {
    height: 17px;
    display: flex;
    align-items: center;
    padding-left: 7px;
}

.style-row svg {
    margin-top: -1px;
}

.style-row span {
    margin-left: 26px;
}

.none {
    font-style: italic;
}

u {
    width: 10px;
    font: bold 13px/13px "Liberation Serif", serif;
    color: #444;
    text-align: center;
}

.tint-tools {
    height: 29px;
    padding-bottom: 2px;
}

.tint-redo {
    margin-left: 59px;
}

.pressed {
    width: 23px;
    height: 23px;
    display: flex;
    align-items: center;
    justify-content: center;
    margin: 1px 6px 0 17px;
    background: #fff;
}

.tint-tools .pressed svg {
    margin-left: -3px;
}

.tint-list {
    height: 122px;
    padding: 1px;
    margin-bottom: 3px;
}

.tint-row {
    height: 15px;
    display: flex;
    align-items: center;
}

.tint-row text {
    font: bold 9px "DejaVu Sans Condensed", sans-serif;
    letter-spacing: -0.6px;
    fill: #444;
}

.tint-row span {
    margin-left: 31px;
}

.selected {
    background: #0078d7;
    color: #fff;
}

.colors-tools {
    height: 27px;
}

.frames {
    margin-left: 44px;
}

.colors-tools .pressed {
    margin: 0 0 0 5px;
}

.pressed i {
    width: 15px;
    height: 15px;
    background: #d5d5d5;
    border: 1px solid #999;
    box-shadow: inset 0 0 0 1px #eee;
}

.measurements {
    height: 56px;
    flex: none;
    border: 1px solid #a0a0a0;
    padding: 3px 0 0 4px;
}
</style>
